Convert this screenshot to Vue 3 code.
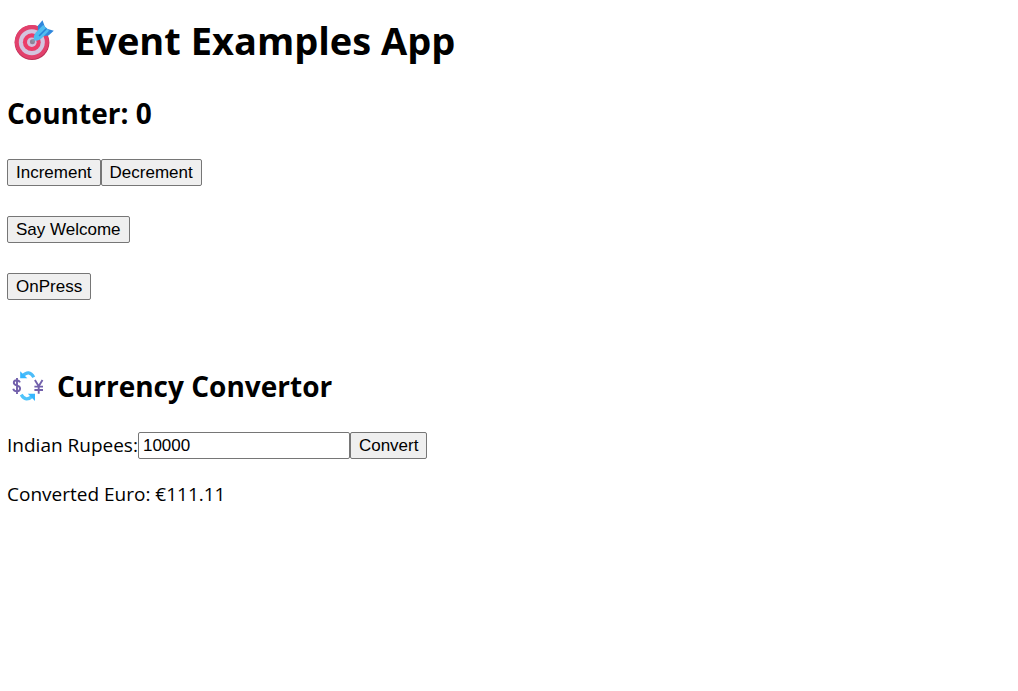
<script setup>
import { ref } from 'vue'

const count = ref(0)
const rupees = ref('10000')
const euro = ref('111.11')
const message = ref('')

function convert() {
  euro.value = (Number(rupees.value) / 90).toFixed(2)
}
</script>

<template>
  <main class="app">
    <h1>
      <svg class="target" viewBox="0 0 40 40" aria-hidden="true">
        <circle cx="18" cy="22.6" r="17.4" fill="#b92f55" />
        <circle cx="17.8" cy="22" r="17" fill="#e2406c" />
        <circle cx="17.8" cy="22.2" r="13" fill="#d3c4df" />
        <circle cx="17.8" cy="22.2" r="8.9" fill="#ec3c69" />
        <circle cx="17.8" cy="22.2" r="4.8" fill="#d0bfdc" />
        <circle cx="18.4" cy="21.8" r="2.5" fill="#8e8298" />
        <path d="M18.5 21.5 25 15" stroke="#8b93a6" stroke-width="1.8" />
        <path d="M24 11.5 23.8 5.8 28.5 0.3 30.8 6.5 33.7 9 39.8 10.7 34.5 15.4 28.5 16.3Z" fill="#2f87dc" />
        <path d="M20.3 20.2Q18.6 16 22 12.2L29.2 5 35 10.8 28 18Q23.8 21.8 20.3 20.2Z" fill="#50bdf0" />
        <path d="M25.5 15.5 32 9" stroke="#2984d8" stroke-width="1.6" stroke-linecap="round" />
      </svg>
      <span>Event Examples App</span>
    </h1>
    <h2>Counter: {{ count }}</h2>
    <div class="row">
      <button type="button" @click="count++">Increment</button>
      <button type="button" @click="count--">Decrement</button>
    </div>
    <div class="row"><button type="button" @click="message = 'Welcome'">Say Welcome</button></div>
    <div class="row"><button type="button" @click="message = 'I was clicked'">OnPress</button></div>

    <h2 class="converter-title">
      <svg class="exchange" viewBox="0 0 32 32" fill="none" aria-hidden="true">
        <path d="M10.5 6.2Q17-.8 21.8 7.2" stroke="#4bbcf8" stroke-width="3.2" />
        <path d="M8.2 1.2V8.3H15.3Z" fill="#35b6ff" />
        <path d="M9.2 24.6Q13.8 32.5 20.5 26" stroke="#4fc4fb" stroke-width="3.2" />
        <path d="M15.8 23.8H23V31Z" fill="#35b6ff" />
        <g stroke="#7260ab" stroke-width="1.9">
          <path d="M8 12.4C6.8 9.3 1.8 9.6 1.8 12.8C1.8 16.4 8.1 14.5 8.1 18.6C8.1 22.2 2.2 22.2 1.2 18.8M5 8V24" />
          <path d="M22.9 10 26.7 16.2 30.5 10M26.7 16V23.7M22.4 16.6H31M22.4 20H31" />
        </g>
      </svg>
      <span>Currency Convertor</span>
    </h2>
    <form class="row" @submit.prevent="convert">
      <label for="rupees">Indian Rupees:</label>
      <input id="rupees" v-model="rupees" type="text" />
      <button type="submit">Convert</button>
    </form>
    <p>Converted Euro: €{{ euro }}</p>
  </main>
</template>

<style>
body {
  margin: 0;
  background: #fff;
}
</style>

<style scoped>
.app {
  padding: 13px 7px;
  font-family: "Segoe UI", "Open Sans", "Noto Sans", sans-serif;
  font-size: 19px;
  line-height: 27px;
  color: #000;
}
h1,
h2 {
  display: flex;
  align-items: center;
  font-weight: 700;
}
h1 {
  margin: 0 0 26px;
  font-size: 38px;
  line-height: 54px;
}
h2 {
  margin: 0 0 26px;
  font-size: 28px;
  line-height: 40px;
}
.target {
  width: 40px;
  height: 40px;
  margin: 0 20px 0 7px;
}
.exchange {
  width: 32px;
  height: 32px;
  margin: 0 13px 0 5px;
}
.row {
  display: flex;
  margin-bottom: 30px;
}
.converter-title {
  margin-top: 66px;
}
button,
input {
  box-sizing: border-box;
  height: 27px;
  border: 1px solid #767676;
  border-radius: 2px;
  font-family: "Liberation Sans", Arial, sans-serif;
  font-size: 17px;
  line-height: 22px;
  color: #000;
}
button {
  padding: 0 8px;
  background: #efefef;
}
input {
  width: 212px;
  padding: 0 4px;
  background: #fff;
}
form.row {
  margin-bottom: 22px;
}
p {
  margin: 0;
}
</style>
